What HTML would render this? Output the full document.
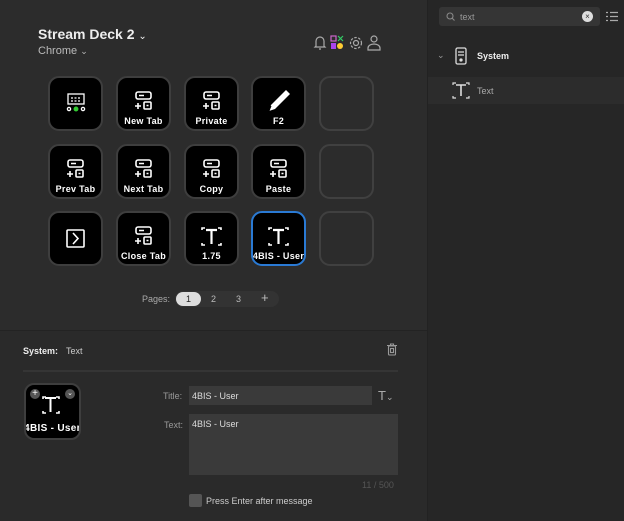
<!DOCTYPE html><html><head><style>
*{margin:0;padding:0;box-sizing:border-box}
body{width:624px;height:521px;background:#2a2a2a;font-family:"Liberation Sans",sans-serif;color:#ddd;position:relative;overflow:hidden}
.top{position:absolute;left:0;top:0;width:427px;height:330px;background:#2c2c2c}
.right{position:absolute;left:427px;top:0;width:197px;height:521px;background:#262626;border-left:1px solid #222}
.bot{position:absolute;left:0;top:330px;width:427px;height:191px;background:#2a2a2a;border-top:1px solid #232323}
.k{position:absolute;width:55px;height:55px;border-radius:11px;background:#000;border:2px solid #3e3e3e;overflow:hidden}
.k.e{background:#2c2c2c;border-color:#404040}
.k.s{border-color:#2a7ad4}
.k svg{position:absolute;left:0;top:0}
.lb{position:absolute;left:-4px;right:-4px;bottom:3px;text-align:center;font-weight:bold;font-size:9px;color:#fff;letter-spacing:.3px;white-space:nowrap}
.t{position:absolute;white-space:nowrap}
</style></head><body>
<div class="top"></div><div class="right"></div><div class="bot"></div>
<div class="t" style="left:38px;top:26px;font-size:14px;font-weight:bold;color:#eee">Stream Deck 2 <span style="font-weight:normal;font-size:10px">&#8964;</span></div>
<div class="t" style="left:38px;top:45px;font-size:11px;color:#bbb">Chrome <span style="font-size:9px">&#8964;</span></div>
<svg style="position:absolute;left:312px;top:34px" width="70" height="18" fill="none" stroke="#aaa" stroke-width="1.2">
<path d="M4 12V7a4 4 0 018 0v5l1 1H3zM7 15h2"/>
<rect x="19" y="2" width="5" height="5" stroke="#c6c"/><path d="M26 2l5 5M31 2l-5 5" stroke="#3c6"/><rect x="19" y="9" width="5" height="6" fill="#a4e" stroke="none"/><circle cx="28" cy="12" r="3" fill="#fc3" stroke="none"/>
<circle cx="44" cy="9" r="2.5"/><circle cx="44" cy="9" r="5.5" stroke-dasharray="2.5 1.5"/>
<circle cx="62" cy="5" r="3"/><path d="M56 16v-2a6 4 0 0112 0v2z"/>
</svg>
<!-- keys -->
<div class="k" style="left:48px;top:76px"><svg width="51" height="51" fill="none" stroke="#fff" stroke-width="1.3"><rect x="18" y="16" width="16" height="10"/><path d="M21 20h10M21 23h10" stroke-dasharray="2 1.5"/><circle cx="19" cy="31" r="1.6"/><circle cx="26" cy="31" r="1.8" fill="#3c3" stroke="#3c3"/><circle cx="33" cy="31" r="1.6"/></svg></div>
<div class="k" style="left:116px;top:76px"><svg width="51" height="51" fill="none" stroke="#fff" stroke-width="1.6"><rect x="18" y="14" width="15" height="7" rx="2"/><path d="M21 17.5h5M17 28h6M20 25v6"/><rect x="26" y="24" width="7" height="7" rx="1"/><path d="M28.5 27.5h2"/></svg><div class="lb">New Tab</div></div>
<div class="k" style="left:184px;top:76px"><svg width="51" height="51" fill="none" stroke="#fff" stroke-width="1.6"><rect x="18" y="14" width="15" height="7" rx="2"/><path d="M21 17.5h5M17 28h6M20 25v6"/><rect x="26" y="24" width="7" height="7" rx="1"/><path d="M28.5 27.5h2"/></svg><div class="lb">Private</div></div>
<div class="k" style="left:251px;top:76px"><svg width="51" height="51"><path d="M33 12l4 4-15 15-6 2 2-6z" fill="#fff"/><path d="M16 33l2-5" stroke="#000"/></svg><div class="lb">F2</div></div>
<div class="k e" style="left:319px;top:76px"></div>
<div class="k" style="left:48px;top:144px"><svg width="51" height="51" fill="none" stroke="#fff" stroke-width="1.6"><rect x="18" y="14" width="15" height="7" rx="2"/><path d="M21 17.5h5M17 28h6M20 25v6"/><rect x="26" y="24" width="7" height="7" rx="1"/><path d="M28.5 27.5h2"/></svg><div class="lb">Prev Tab</div></div>
<div class="k" style="left:116px;top:144px"><svg width="51" height="51" fill="none" stroke="#fff" stroke-width="1.6"><rect x="18" y="14" width="15" height="7" rx="2"/><path d="M21 17.5h5M17 28h6M20 25v6"/><rect x="26" y="24" width="7" height="7" rx="1"/><path d="M28.5 27.5h2"/></svg><div class="lb">Next Tab</div></div>
<div class="k" style="left:184px;top:144px"><svg width="51" height="51" fill="none" stroke="#fff" stroke-width="1.6"><rect x="18" y="14" width="15" height="7" rx="2"/><path d="M21 17.5h5M17 28h6M20 25v6"/><rect x="26" y="24" width="7" height="7" rx="1"/><path d="M28.5 27.5h2"/></svg><div class="lb">Copy</div></div>
<div class="k" style="left:251px;top:144px"><svg width="51" height="51" fill="none" stroke="#fff" stroke-width="1.6"><rect x="18" y="14" width="15" height="7" rx="2"/><path d="M21 17.5h5M17 28h6M20 25v6"/><rect x="26" y="24" width="7" height="7" rx="1"/><path d="M28.5 27.5h2"/></svg><div class="lb">Paste</div></div>
<div class="k e" style="left:319px;top:144px"></div>
<div class="k" style="left:48px;top:211px"><svg width="51" height="51" fill="none" stroke="#fff" stroke-width="1.6"><rect x="17" y="17" width="17" height="17" rx="1"/><path d="M23 20l5 5.5-5 5.5"/></svg></div>
<div class="k" style="left:116px;top:211px"><svg width="51" height="51" fill="none" stroke="#fff" stroke-width="1.6"><rect x="18" y="14" width="15" height="7" rx="2"/><path d="M21 17.5h5M17 28h6M20 25v6"/><rect x="26" y="24" width="7" height="7" rx="1"/><path d="M28.5 27.5h2"/></svg><div class="lb">Close Tab</div></div>
<div class="k" style="left:184px;top:211px"><svg width="51" height="51" fill="none" stroke="#fff" stroke-width="1.6"><path d="M16 17v-2h3M32 15h3v2M16 30v2h3M32 32h3v-2"/><path d="M20 17h11M25.5 17v14" stroke-width="2.2"/></svg><div class="lb">1.75</div></div>
<div class="k s" style="left:251px;top:211px"><svg width="51" height="51" fill="none" stroke="#fff" stroke-width="1.6"><path d="M16 17v-2h3M32 15h3v2M16 30v2h3M32 32h3v-2"/><path d="M20 17h11M25.5 17v14" stroke-width="2.2"/></svg><div class="lb">4BIS - User</div></div>
<div class="k e" style="left:319px;top:211px"></div>
<!-- pages -->
<div class="t" style="left:142px;top:294px;font-size:9px;color:#aaa">Pages:</div>
<div style="position:absolute;left:175px;top:291px;width:104px;height:16px;border-radius:8px;background:#333"></div>
<div style="position:absolute;left:176px;top:292px;width:25px;height:14px;border-radius:7px;background:#ddd;color:#222;font-size:9px;text-align:center;line-height:14px">1</div>
<div class="t" style="left:211px;top:294px;font-size:9px;color:#bbb">2</div>
<div class="t" style="left:236px;top:294px;font-size:9px;color:#bbb">3</div>
<div class="t" style="left:261px;top:290px;font-size:13px;color:#bbb">+</div>
<!-- bottom -->
<div class="t" style="left:23px;top:346px;font-size:9px;font-weight:bold;color:#eee">System:</div>
<div class="t" style="left:66px;top:346px;font-size:9px;color:#ccc">Text</div>
<svg style="position:absolute;left:386px;top:343px" width="12" height="13" fill="none" stroke="#999" stroke-width="1.1"><path d="M1 2.5h10M4.5 2.5V1h3v1.5"/><rect x="2.5" y="3" width="7" height="9" rx="1"/><rect x="4.5" y="5.5" width="3" height="4"/></svg>
<div style="position:absolute;left:23px;top:370px;width:375px;height:2px;background:#353535"></div>
<div class="k" style="left:24px;top:383px;width:57px;height:57px;border-radius:10px"><svg width="53" height="53" fill="none" stroke="#fff" stroke-width="1.6"><path d="M17 14v-2h3M30 12h3v2M17 26v2h3M30 28h3v-2" /><path d="M19 13h11M24.5 13v14" stroke-width="2"/></svg>
<div style="position:absolute;left:4px;top:4px;width:10px;height:10px;border-radius:5px;background:#555;color:#fff;font-size:10px;line-height:9px;text-align:center">+</div>
<div style="position:absolute;right:4px;top:4px;width:10px;height:10px;border-radius:5px;background:#555;color:#fff;font-size:7px;line-height:9px;text-align:center">&#8964;</div>
<div class="lb" style="font-size:10px;bottom:4px">4BIS - User</div></div>
<div class="t" style="left:163px;top:391px;font-size:9px;color:#999">Title:</div>
<div style="position:absolute;left:189px;top:386px;width:183px;height:19px;background:#3a3a3a;font-size:9px;color:#ddd;padding:5px 3px">4BIS - User</div>
<div class="t" style="left:378px;top:388px;font-size:13px;color:#aaa">T<span style="font-size:9px">&#8964;</span></div>
<div class="t" style="left:164px;top:420px;font-size:9px;color:#999">Text:</div>
<div style="position:absolute;left:189px;top:414px;width:209px;height:61px;background:#3a3a3a;font-size:9px;color:#ddd;padding:5px 3px">4BIS - User</div>
<div class="t" style="left:362px;top:480px;font-size:9px;color:#555">11 / 500</div>
<div style="position:absolute;left:189px;top:494px;width:13px;height:13px;border-radius:2px;background:#555"></div>
<div class="t" style="left:206px;top:496px;font-size:9px;color:#ccc">Press Enter after message</div>
<!-- right panel -->
<div style="position:absolute;left:439px;top:7px;width:161px;height:19px;border-radius:3px;background:#353535"></div>
<svg style="position:absolute;left:446px;top:12px" width="9" height="9" fill="none" stroke="#888" stroke-width="1.1"><circle cx="4" cy="4" r="3"/><path d="M6 6l2.5 2.5"/></svg>
<div class="t" style="left:460px;top:12px;font-size:9px;color:#999">text</div>
<div style="position:absolute;left:582px;top:11px;width:11px;height:11px;border-radius:6px;background:#ddd;color:#333;font-size:8px;line-height:11px;text-align:center">×</div>
<svg style="position:absolute;left:605px;top:11px" width="14" height="11" stroke="#aaa" stroke-width="1.2"><path d="M1 1.5h2M5 1.5h8M1 5.5h2M5 5.5h8M1 9.5h2M5 9.5h8"/></svg>
<div class="t" style="left:437px;top:50px;font-size:9px;color:#999">&#8964;</div>
<svg style="position:absolute;left:454px;top:47px" width="14" height="18" fill="none" stroke="#ddd" stroke-width="1.3"><rect x="2" y="1" width="10" height="16" rx="1.5"/><path d="M4 5h6M4 8h6"/><circle cx="7" cy="13" r="1" fill="#ddd"/></svg>
<div class="t" style="left:477px;top:51px;font-size:9px;font-weight:bold;color:#eee">System</div>
<div style="position:absolute;left:428px;top:77px;width:196px;height:27px;background:#2c2c2c"></div>
<svg style="position:absolute;left:452px;top:82px" width="18" height="17" fill="none" stroke="#ddd" stroke-width="1.2"><path d="M1 3V1h3M14 1h3v2M1 14v2h3M14 16h3v-2"/><path d="M4 3h10M9 3v11" stroke-width="1.6"/></svg>
<div class="t" style="left:477px;top:86px;font-size:9px;color:#aaa">Text</div>
</body></html>
